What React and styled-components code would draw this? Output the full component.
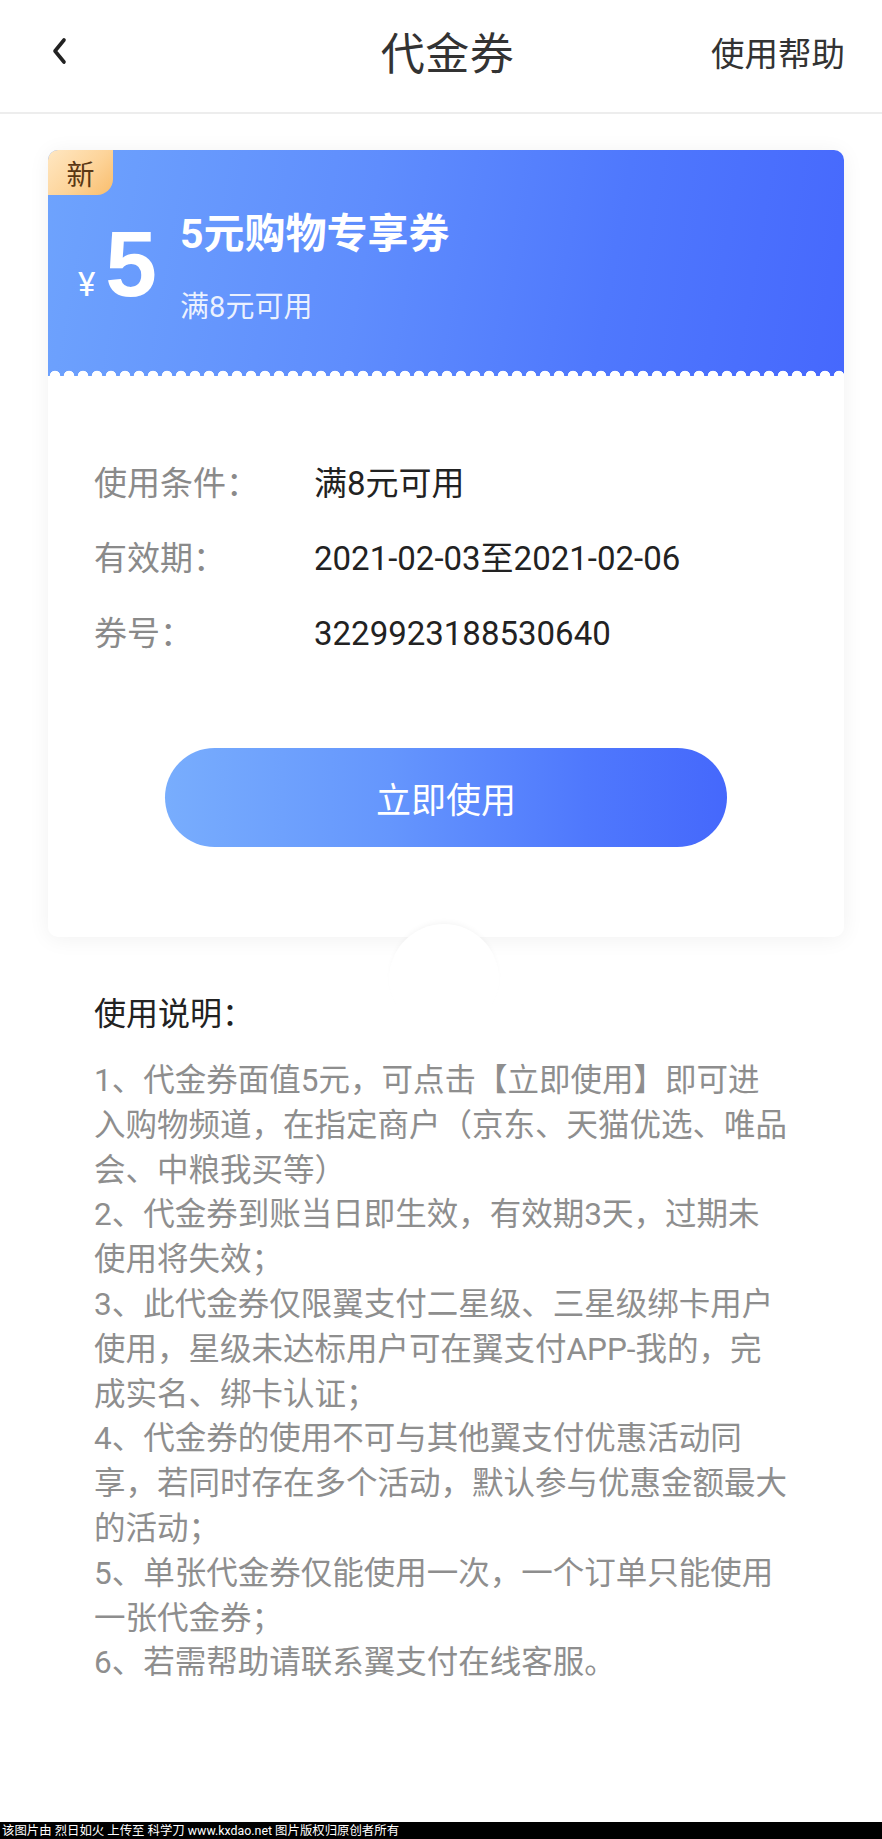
import React from "react";
import styled, { createGlobalStyle } from "styled-components";

const GlobalStyle = createGlobalStyle`
  html, body {
    margin: 0;
    padding: 0;
    background: #fff;
  }
  body {
    font-family: Roboto, "Noto Sans CJK SC", sans-serif;
  }
`;

const Page = styled.div`
  min-height: 1839px;
  display: flex;
  flex-direction: column;
  background: #fff;
`;

const Header = styled.header`
  height: 114px;
  border-bottom: 2px solid #ededed;
  display: grid;
  grid-template-columns: 1fr auto 1fr;
  align-items: center;
  padding: 0 37px 10px 50px;
  box-sizing: border-box;
`;

const BackButton = styled.button`
  border: 0;
  background: none;
  padding: 0;
  width: 24px;
  height: 32px;
  display: flex;
  align-items: center;
  cursor: pointer;
  svg {
    width: 22px;
    height: 30px;
  }
`;

const Title = styled.h1`
  margin: 0;
  font-size: 44px;
  font-weight: 400;
  color: #333;
  letter-spacing: 0.5px;
`;

const HelpLink = styled.a`
  justify-self: end;
  font-size: 33.5px;
  color: #333;
  text-decoration: none;
`;

const Card = styled.section`
  position: relative;
  margin: 36px 38px 0 48px;
  padding-bottom: 90px;
  border-radius: 10px;
  background: #fff;
  box-shadow: 0 2px 22px rgba(0, 0, 0, 0.06);
`;

const Ticket = styled.div`
  position: relative;
  height: 226px;
  box-sizing: border-box;
  padding: 61px 0 0 30px;
  display: flex;
  align-items: flex-start;
  border-radius: 10px 10px 0 0;
  background: linear-gradient(100deg, #6ea3fd 0%, #5f8dfd 40%, #4f78fd 70%, #4668fd 100%);
  color: #fff;
  &::after {
    content: "";
    position: absolute;
    left: 0;
    right: 0;
    bottom: 0;
    height: 7px;
    background: radial-gradient(circle at 7px 7px, #fff 5px, transparent 5.6px) repeat-x;
    background-size: 14px 7px;
  }
`;

const NewBadge = styled.span`
  position: absolute;
  top: 0;
  left: 0;
  width: 65px;
  height: 45px;
  display: flex;
  align-items: center;
  justify-content: center;
  border-radius: 10px 0 16px 0;
  background: linear-gradient(135deg, #ffe7c2 0%, #fdd49a 55%, #f9bd6c 100%);
  color: #5a3714;
  font-size: 28px;
`;

const Amount = styled.div`
  display: flex;
  align-items: baseline;
  margin-top: 7px;
`;

const Yen = styled.span`
  font-size: 33px;
  line-height: 1;
  margin-right: 10px;
`;

const Value = styled.span`
  font-family: "Liberation Sans", Arial, sans-serif;
  font-weight: 700;
  font-size: 93px;
  line-height: 1;
`;

const Info = styled.div`
  margin-left: 23px;
  display: flex;
  flex-direction: column;
`;

const CouponName = styled.div`
  font-size: 41px;
  font-weight: 700;
  line-height: 46px;
`;

const CouponRule = styled.div`
  margin-top: 31px;
  font-size: 29px;
  line-height: 38px;
  color: rgba(255, 255, 255, 0.88);
`;

const Details = styled.div`
  padding: 70px 0 0 46px;
`;

const Row = styled.div`
  display: grid;
  grid-template-columns: 220px 1fr;
  font-size: 33px;
  line-height: 75px;
`;

const Label = styled.span`
  color: #8a8a8a;
`;

const RowValue = styled.span`
  color: #222;
`;

const UseButton = styled.button`
  display: block;
  margin: 77px auto 0;
  width: 562px;
  height: 99px;
  border: 0;
  border-radius: 50px;
  background: linear-gradient(90deg, #78adfd 0%, #6596fd 40%, #4f78fd 75%, #4568fc 100%);
  color: #fff;
  font-family: inherit;
  font-size: 35px;
  cursor: pointer;
`;

const Knob = styled.span`
  position: absolute;
  left: 50%;
  bottom: -97px;
  width: 110px;
  height: 110px;
  margin-left: -57px;
  border-radius: 50%;
  background: #fff;
  box-shadow: 0 -4px 6px -3px rgba(0, 0, 0, 0.05);
  z-index: 1;
`;

const Notes = styled.section`
  position: relative;
  padding: 55px 60px 0 94px;
`;

const NotesTitle = styled.h2`
  margin: 0;
  font-size: 32px;
  font-weight: 400;
  line-height: 45px;
  color: #222;
`;

const NotesList = styled.div`
  margin-top: 22px;
  font-size: 31.5px;
  line-height: 44.8px;
  color: #8e8e8e;
  white-space: nowrap;
`;

const Watermark = styled.footer`
  margin-top: auto;
  height: 17px;
  background: #000;
  color: #fff;
  font-size: 12.4px;
  line-height: 17px;
  padding-left: 2px;
  white-space: nowrap;
`;

const rows = [
  { label: "使用条件：", value: "满8元可用" },
  { label: "有效期：", value: "2021-02-03至2021-02-06" },
  { label: "券号：", value: "3229923188530640" },
];

const notes = [
  ["1、代金券面值5元，可点击【立即使用】即可进", "入购物频道，在指定商户（京东、天猫优选、唯品", "会、中粮我买等）"],
  ["2、代金券到账当日即生效，有效期3天，过期未", "使用将失效；"],
  ["3、此代金券仅限翼支付二星级、三星级绑卡用户", "使用，星级未达标用户可在翼支付APP-我的，完", "成实名、绑卡认证；"],
  ["4、代金券的使用不可与其他翼支付优惠活动同", "享，若同时存在多个活动，默认参与优惠金额最大", "的活动；"],
  ["5、单张代金券仅能使用一次，一个订单只能使用", "一张代金券；"],
  ["6、若需帮助请联系翼支付在线客服。"],
];

function BackIcon() {
  return (
    <svg viewBox="0 0 22 30" fill="none">
      <polyline points="14,4 5,15 14,26" stroke="#222" strokeWidth="3.6" strokeLinecap="round" strokeLinejoin="round" />
    </svg>
  );
}

export default function App() {
  return (
    <Page>
      <GlobalStyle />
      <Header>
        <BackButton aria-label="返回">
          <BackIcon />
        </BackButton>
        <Title>代金券</Title>
        <HelpLink href="#">使用帮助</HelpLink>
      </Header>

      <Card>
        <Ticket>
          <NewBadge>新</NewBadge>
          <Amount>
            <Yen>¥</Yen>
            <Value>5</Value>
          </Amount>
          <Info>
            <CouponName>5元购物专享券</CouponName>
            <CouponRule>满8元可用</CouponRule>
          </Info>
        </Ticket>
        <Details>
          {rows.map((r) => (
            <Row key={r.label}>
              <Label>{r.label}</Label>
              <RowValue>{r.value}</RowValue>
            </Row>
          ))}
        </Details>
        <UseButton>立即使用</UseButton>
        <Knob />
      </Card>

      <Notes>
        <NotesTitle>使用说明：</NotesTitle>
        <NotesList>
          {notes.map((lines, i) => (
            <div key={i}>
              {lines.map((l, j) => (
                <div key={j}>{l}</div>
              ))}
            </div>
          ))}
        </NotesList>
      </Notes>

      <Watermark>该图片由 烈日如火 上传至 科学刀 www.kxdao.net 图片版权归原创者所有</Watermark>
    </Page>
  );
}
